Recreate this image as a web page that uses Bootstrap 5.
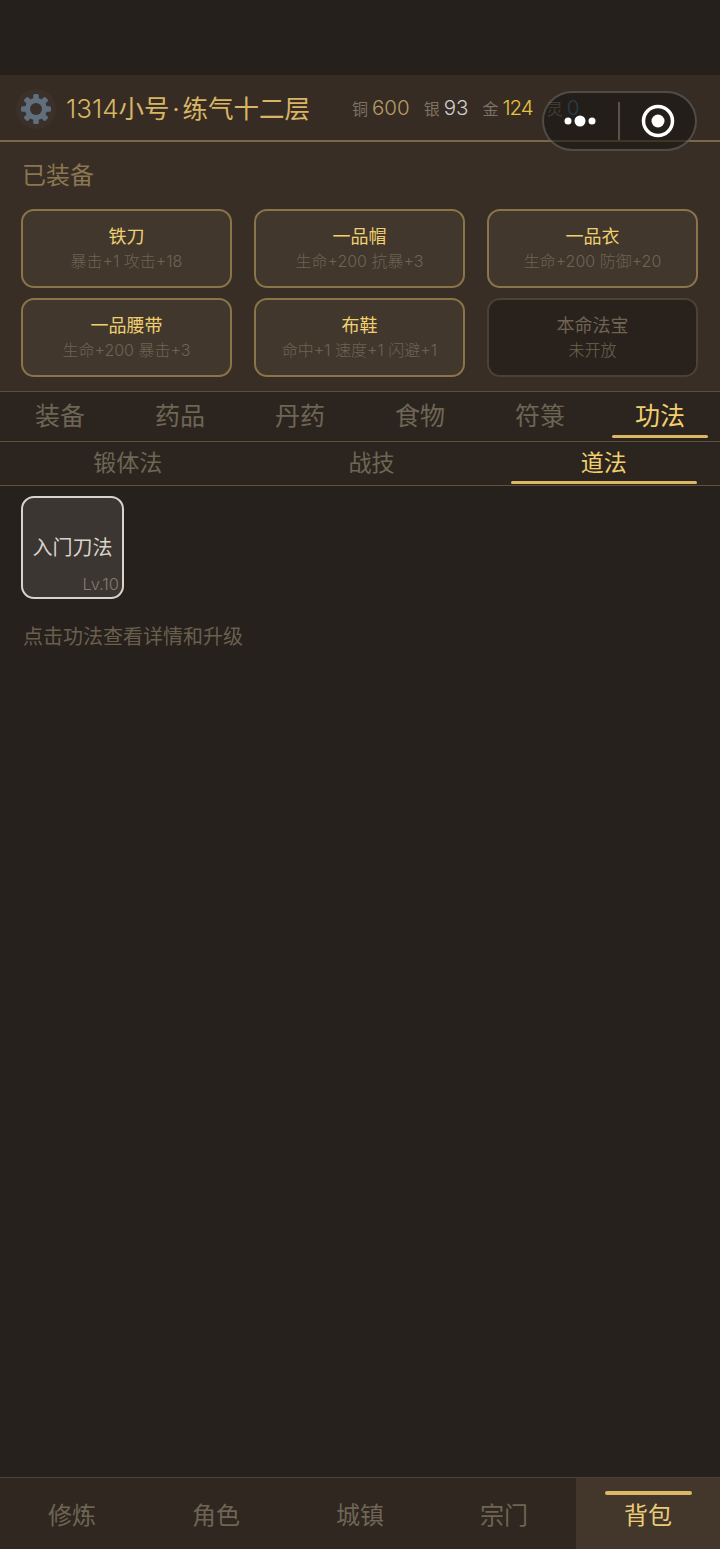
<!DOCTYPE html>
<html lang="zh">
<head>
    <meta charset="UTF-8">
    <meta name="viewport" content="width=device-width, initial-scale=1.0">
    <title>背包</title>
    <link href="https://cdn.jsdelivr.net/npm/bootstrap@5.3.0/dist/css/bootstrap.min.css" rel="stylesheet">
    <style>
        body { background: #26211c; font-family: Inter, "Noto Sans CJK SC", "Noto Sans", sans-serif; }
        .screen { height: 1549px; width: 720px; overflow: hidden; }
        .status-gap { height: 75px; background: #25201c; }
        .top-bar { height: 67px; background: #362c24; border-bottom: 2px solid #7b6846; padding-left: 16px; padding-top: 2px; }
        .gear { width: 40px; height: 40px; border-radius: 50%; background: #3b312a; margin-right: 10px; }
        .player-name { font-size: 25.5px; color: #d9b563; width: 286px; white-space: nowrap; line-height: 1; }
        .name-num { font-size: 26px; font-weight: 300; }
        .name-dot { padding: 0 3px; font-size: 24px; }
        .coin { font-size: 16px; color: #7d7263; margin-right: 14px; white-space: nowrap; }
        .coin b { font-weight: 300; font-size: 20.5px; margin-left: 4px; }
        .c-cu { color: #b99d66; } .c-ag { color: #cdced2; } .c-au { color: #e6c340; letter-spacing: -1px; } .c-ling { color: #3f7a9c; }
        .equip-panel { height: 250px; background: #382e25; border-bottom: 1px solid #5e5039; padding: 19px 22px 0 21px; }
        .panel-title { font-size: 24px; line-height: 30px; color: #8a7650; margin: 0 0 18px 1px; }
        .equip-grid { display: grid; grid-template-columns: repeat(3, 211px); gap: 10px 22px; }
        .equip-slot { height: 79px; border: 2px solid #8a7548; border-radius: 13px; background: #41372d; text-align: center; padding-top: 13px; }
        .equip-slot.locked { background: #29221c; border-color: #4b4135; }
        .slot-name { font-size: 18px; line-height: 25px; color: #f0d070; }
        .slot-stat { font-size: 16px; line-height: 24px; color: #6f6453; white-space: nowrap; font-weight: 300; }
        .locked .slot-name, .locked .slot-stat { color: #6f6453; }
        .tab-row { height: 50px; background: #2c251f; border-bottom: 1px solid #5e5039; }
        .tab-cell { width: 120px; text-align: center; font-size: 25px; line-height: 48px; color: #6f6555; position: relative; }
        .tab-cell.on { color: #f2cf6e; }
        .tab-cell.on::after { content: ""; position: absolute; left: 12px; right: 12px; bottom: 3px; height: 3px; border-radius: 2px; background: #dcb765; }
        .sub-row { height: 44px; background: #2c251f; border-bottom: 1px solid #5e5039; }
        .sub-cell { padding: 0 70px; height: 43px; font-size: 23px; line-height: 43px; color: #6f6555; position: relative; }
        .sub-cell.on { color: #f2cf6e; }
        .sub-cell.on::after { content: ""; position: absolute; left: 0; right: 0; bottom: 1px; height: 3px; border-radius: 2px; background: #dcb765; }
        .skill-area { padding: 10px 21px 0; flex: 1; }
        .skill-tile { width: 103px; height: 103px; border: 2px solid #d8d4cc; border-radius: 13px; background: #3b3631; position: relative; text-align: center; color: #d8d4cc; font-size: 20px; line-height: 101px; }
        .skill-lv { position: absolute; right: 3px; bottom: 2px; font-size: 16.5px; line-height: 22px; font-weight: 300; color: #85796a; }
        .hint { margin: 24px 0 0 2px; font-size: 20px; line-height: 28px; color: #6a5f4f; }
        .nav-bottom { height: 72px; background: #2f2720; border-top: 1px solid #4d4335; }
        .nav-cell { width: 144px; text-align: center; font-size: 24px; line-height: 76px; color: #6f6555; position: relative; }
        .nav-cell.on { background: #42372a; color: #eccb78; }
        .nav-cell.on::before { content: ""; position: absolute; left: 29px; right: 28px; top: 13px; height: 4px; border-radius: 2px; background: #dcb765; }
        .capsule { position: absolute; left: 542px; top: 91px; width: 155px; height: 60px; border-radius: 30px; background: rgba(24, 21, 18, .6); border: 2px solid rgba(255, 255, 255, .2); }
    </style>
</head>
<body>
    <div class="screen d-flex flex-column position-relative">
        <div class="status-gap"></div>

        <div class="top-bar d-flex align-items-center">
            <div class="gear d-flex align-items-center justify-content-center flex-shrink-0">
                <svg width="32" height="32" viewBox="0 0 32 32">
                    <g fill="#5f6f7e">
                        <rect x="13.2" y="1" width="5.6" height="30" rx="1.5"/>
                        <rect x="13.2" y="1" width="5.6" height="30" rx="1.5" transform="rotate(45 16 16)"/>
                        <rect x="13.2" y="1" width="5.6" height="30" rx="1.5" transform="rotate(90 16 16)"/>
                        <rect x="13.2" y="1" width="5.6" height="30" rx="1.5" transform="rotate(135 16 16)"/>
                    </g>
                    <circle cx="16" cy="16" r="8.5" fill="none" stroke="#5f6f7e" stroke-width="5"/>
                    <circle cx="16" cy="16" r="6" fill="#3b312a"/>
                </svg>
            </div>
            <div class="player-name"><span class="name-num">1314</span>小号<span class="name-dot">·</span>练气十二层</div>
            <div class="d-flex align-items-center">
                <span class="coin">铜<b class="c-cu">600</b></span>
                <span class="coin">银<b class="c-ag">93</b></span>
                <span class="coin">金<b class="c-au">124</b></span>
                <span class="coin">灵<b class="c-ling">0</b></span>
            </div>
        </div>

        <div class="equip-panel">
            <div class="panel-title">已装备</div>
            <div class="equip-grid">
                <div class="equip-slot"><div class="slot-name">铁刀</div><div class="slot-stat">暴击+1 攻击+18</div></div>
                <div class="equip-slot"><div class="slot-name">一品帽</div><div class="slot-stat">生命+200 抗暴+3</div></div>
                <div class="equip-slot"><div class="slot-name">一品衣</div><div class="slot-stat">生命+200 防御+20</div></div>
                <div class="equip-slot"><div class="slot-name">一品腰带</div><div class="slot-stat">生命+200 暴击+3</div></div>
                <div class="equip-slot"><div class="slot-name">布鞋</div><div class="slot-stat">命中+1 速度+1 闪避+1</div></div>
                <div class="equip-slot locked"><div class="slot-name">本命法宝</div><div class="slot-stat">未开放</div></div>
            </div>
        </div>

        <div class="tab-row d-flex">
            <div class="tab-cell">装备</div>
            <div class="tab-cell">药品</div>
            <div class="tab-cell">丹药</div>
            <div class="tab-cell">食物</div>
            <div class="tab-cell">符箓</div>
            <div class="tab-cell on">功法</div>
        </div>

        <div class="sub-row d-flex justify-content-around">
            <div class="sub-cell">锻体法</div>
            <div class="sub-cell">战技</div>
            <div class="sub-cell on">道法</div>
        </div>

        <div class="skill-area">
            <div class="skill-tile">入门刀法<span class="skill-lv">Lv.10</span></div>
            <div class="hint">点击功法查看详情和升级</div>
        </div>

        <div class="nav-bottom d-flex">
            <div class="nav-cell">修炼</div>
            <div class="nav-cell">角色</div>
            <div class="nav-cell">城镇</div>
            <div class="nav-cell">宗门</div>
            <div class="nav-cell on">背包</div>
        </div>

        <div class="capsule">
            <svg width="151" height="56" viewBox="0 0 151 56" class="d-block">
                <circle cx="24" cy="28" r="3.5" fill="#fff"/>
                <circle cx="36" cy="28" r="5.5" fill="#fff"/>
                <circle cx="48" cy="28" r="3.5" fill="#fff"/>
                <rect x="74" y="9" width="2" height="38" fill="#5a534a"/>
                <circle cx="114" cy="28" r="14.5" fill="none" stroke="#fff" stroke-width="3.5"/>
                <circle cx="114" cy="28" r="6.5" fill="#fff"/>
            </svg>
        </div>
    </div>

    <script src="https://cdn.jsdelivr.net/npm/bootstrap@5.3.0/dist/js/bootstrap.bundle.min.js"></script>
</body>
</html>
